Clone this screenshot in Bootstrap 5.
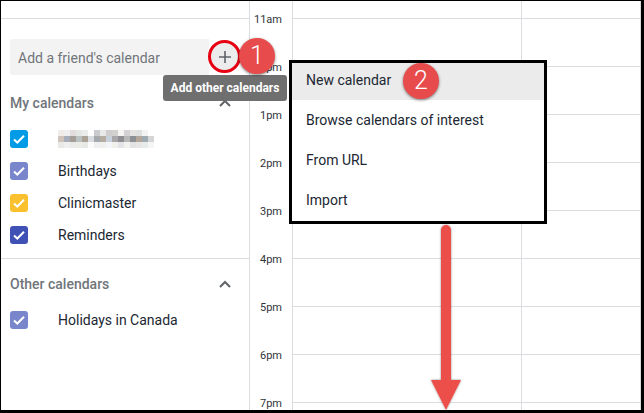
<!DOCTYPE html>
<html lang="en">
<head>
  <meta charset="UTF-8" />
  <meta name="viewport" content="width=device-width, initial-scale=1" />
  <title>Add other calendars</title>
  <link href="https://cdn.jsdelivr.net/npm/bootstrap@5.3.0/dist/css/bootstrap.min.css" rel="stylesheet" />
  <style>
    html, body { height: 100%; }
    body {
      background: #fff;
      font-family: Roboto, "Liberation Sans", sans-serif;
      font-size: 14px;
      color: #212732;
      overflow: hidden;
    }

    /* Screenshot frame: heavier on the right and bottom */
    .shot-frame {
      position: relative;
      width: 644px;
      height: 413px;
      border-style: solid;
      border-color: #000;
      border-width: 1px 3px 3px 1px;
      overflow: hidden;
    }

    /* Left sidebar */
    .cal-side { width: 248px; flex: none; }
    .side-top { height: 17px; border-bottom: 1px solid #dadce0; box-sizing: content-box; }
    .friend-row { margin: 20px 0 0 9px; }
    .friend-input {
      width: 199px;
      height: 36px;
      padding-left: 8px;
      background: #f3f3f3;
      border-radius: 3px 0 0 3px;
      color: #70757a;
      line-height: 38px;
    }
    .plus-btn {
      width: 30px;
      height: 30px;
      margin-left: 1px;
      border-radius: 50%;
      background: #ececec;
    }
    .section-head {
      height: 20px;
      padding: 0 18px 0 9px;
      color: #70757a;
      font-weight: 500;
    }
    .section-mine { margin-top: 18px; }
    .section-other { margin-top: 15px; }
    .cal-list { margin-top: 10px; }
    .cal-item { height: 32px; padding-left: 9px; gap: 30px; }
    .cal-box {
      width: 18px;
      height: 18px;
      flex: none;
      border-radius: 3px;
    }
    .cal-sep { height: 1px; margin-top: 7px; background: #dadce0; }
    .c-blue { background: #039be5; }
    .c-lav { background: #7986cb; }
    .c-yellow { background: #fbc02d; }
    .c-indigo { background: #3f51b5; }

    /* Hour column and day grid */
    .cal-hours {
      width: 42px;
      flex: none;
      border-left: 1px solid #dadce0;
      border-right: 1px solid #dadce0;
      box-sizing: content-box;
      font-size: 11px;
      color: #30343a;
    }
    .hour-cell {
      height: 48px;
      padding-right: 10px;
      text-align: right;
      line-height: 13px;
    }
    .hour-first { height: 12px; }
    .cal-day { flex: 1 1 0; border-right: 1px solid #dadce0; }
    .cal-day:last-child { border-right: 0; }
    .day-top { height: 17px; border-bottom: 1px solid #dadce0; box-sizing: content-box; }
    .day-cell { height: 48px; border-bottom: 1px solid #dadce0; }
    .day-first { width: 229px; flex: none; }

    /* Things drawn over the calendar */
    .add-tip {
      position: absolute;
      left: 162px;
      top: 74px;
      width: 124px;
      height: 26px;
      background: #6f6f6f;
      border-radius: 3px;
      color: #fff;
      font-size: 12px;
      font-weight: 700;
      line-height: 26px;
      text-align: center;
    }
    .plus-ring {
      position: absolute;
      left: 207px;
      top: 39px;
      width: 33px;
      height: 33px;
      border: 3px solid #e60012;
      border-radius: 50%;
    }
    .step-dot {
      position: absolute;
      z-index: 1001; /* dropdown-menu sits at 1000 */
      width: 36px;
      height: 36px;
      border-radius: 50%;
      background: #e84b4b;
      box-shadow: 0 1px 3px rgba(0, 0, 0, .5);
      color: #fff;
      font-size: 25px;
      font-weight: 300;
      line-height: 36px;
      text-align: center;
    }
    .step-one { left: 238px; top: 37px; }
    .step-two { left: 402px; top: 62px; }
    .new-menu {
      position: absolute;
      left: 288px;
      top: 59px;
      width: 258px;
      height: 164px;
      min-width: 0;
      margin: 0;
      padding: 0;
      display: block;
      background: #fff;
      border: 3px solid #000;
      border-radius: 0;
    }
    .new-menu .dropdown-item {
      height: 40px;
      padding: 0 0 0 14px;
      color: #212732;
      font-size: 14px;
      line-height: 40px;
    }
    .new-menu .dropdown-item.is-hover { height: 37px; line-height: 34px; background: #ebebeb; }
    .down-arrow { position: absolute; left: 425px; top: 222px; }
  </style>
</head>
<body>

<div class="shot-frame d-flex">
  <!-- Sidebar -->
  <aside class="cal-side">
    <div class="side-top"></div>
    <div class="friend-row d-flex align-items-center">
      <div class="friend-input">Add a friend's calendar</div>
      <div class="plus-btn d-flex align-items-center justify-content-center">
        <svg width="12" height="12" viewBox="0 0 12 12"><path d="M6 0v12M0 6h12" stroke="#5f6368" stroke-width="1.6" fill="none"/></svg>
      </div>
    </div>

    <div class="section-head section-mine d-flex align-items-center justify-content-between">
      <span>My calendars</span>
      <svg width="12" height="8" viewBox="0 0 12 8"><path d="M1 7l5-5 5 5" stroke="#5f6368" stroke-width="2" fill="none"/></svg>
    </div>
    <div class="cal-list">
      <div class="cal-item d-flex align-items-center">
        <span class="cal-box c-blue d-flex align-items-center justify-content-center"><svg width="14" height="14" viewBox="0 0 14 14"><path d="M2 7.5l3.3 3L12 3.8" stroke="#fff" stroke-width="2" fill="none"/></svg></span>
        <svg id="blurName" width="96" height="18" viewBox="0 0 96 18" shape-rendering="crispEdges"></svg>
      </div>
      <div class="cal-item d-flex align-items-center">
        <span class="cal-box c-lav d-flex align-items-center justify-content-center"><svg width="14" height="14" viewBox="0 0 14 14"><path d="M2 7.5l3.3 3L12 3.8" stroke="#fff" stroke-width="2" fill="none"/></svg></span>
        <span>Birthdays</span>
      </div>
      <div class="cal-item d-flex align-items-center">
        <span class="cal-box c-yellow d-flex align-items-center justify-content-center"><svg width="14" height="14" viewBox="0 0 14 14"><path d="M2 7.5l3.3 3L12 3.8" stroke="#fff" stroke-width="2" fill="none"/></svg></span>
        <span>Clinicmaster</span>
      </div>
      <div class="cal-item d-flex align-items-center">
        <span class="cal-box c-indigo d-flex align-items-center justify-content-center"><svg width="14" height="14" viewBox="0 0 14 14"><path d="M2 7.5l3.3 3L12 3.8" stroke="#fff" stroke-width="2" fill="none"/></svg></span>
        <span>Reminders</span>
      </div>
    </div>
    <div class="cal-sep"></div>

    <div class="section-head section-other d-flex align-items-center justify-content-between">
      <span>Other calendars</span>
      <svg width="12" height="8" viewBox="0 0 12 8"><path d="M1 7l5-5 5 5" stroke="#5f6368" stroke-width="2" fill="none"/></svg>
    </div>
    <div class="cal-list">
      <div class="cal-item d-flex align-items-center">
        <span class="cal-box c-lav d-flex align-items-center justify-content-center"><svg width="14" height="14" viewBox="0 0 14 14"><path d="M2 7.5l3.3 3L12 3.8" stroke="#fff" stroke-width="2" fill="none"/></svg></span>
        <span>Holidays in Canada</span>
      </div>
    </div>
  </aside>

  <!-- Hours -->
  <div class="cal-hours">
    <div class="hour-first"></div>
    <div class="hour-cell">11am</div>
    <div class="hour-cell">12pm</div>
    <div class="hour-cell">1pm</div>
    <div class="hour-cell">2pm</div>
    <div class="hour-cell">3pm</div>
    <div class="hour-cell">4pm</div>
    <div class="hour-cell">5pm</div>
    <div class="hour-cell">6pm</div>
    <div class="hour-cell">7pm</div>
  </div>

  <!-- Days, rows are filled in below -->
  <div class="cal-day day-first"><div class="day-top"></div></div>
  <div class="cal-day"><div class="day-top"></div></div>

  <!-- Overlays -->
  <div class="plus-ring"></div>
  <div class="add-tip">Add other calendars</div>
  <div class="step-dot step-one">1</div>

  <div class="dropdown-menu new-menu">
    <a class="dropdown-item is-hover" href="#">New calendar</a>
    <a class="dropdown-item" href="#">Browse calendars of interest</a>
    <a class="dropdown-item" href="#">From URL</a>
    <a class="dropdown-item" href="#">Import</a>
  </div>
  <div class="step-dot step-two">2</div>

  <svg class="down-arrow" width="40" height="188" viewBox="0 0 40 188">
    <defs><filter id="arrowShadow" x="-30%" y="-5%" width="160%" height="110%"><feDropShadow dx="0" dy="0" stdDeviation="1" flood-color="#000" flood-opacity=".45"/></filter></defs>
    <path filter="url(#arrowShadow)" fill="#ec4f4a" d="M15 7a5 5 0 0 1 10 0v150h10l-15 30-15-30h10z"/>
  </svg>
</div>

<script src="https://cdn.jsdelivr.net/npm/bootstrap@5.3.0/dist/js/bootstrap.bundle.min.js"></script>
<script>
  // Hour rows for both day columns
  document.querySelectorAll('.cal-day').forEach(day => {
    for (let i = 0; i < 8; i++) {
      const cell = document.createElement('div');
      cell.className = 'day-cell';
      day.appendChild(cell);
    }
  });

  // Pixelated calendar name, 16 x 3 blocks of 6px
  const blocks = [
    ['f1ece9','f0efef','e3dcdc','e4e7e6','e9ecea','ffffff','c9cbcf','e9e9ea','cfcdce','d3d1d0','f6f5f4','d3d2d4','e6e4e3','dfe1e0','f3f3f3','ffffff'],
    ['cfc3bb','a8aeb9','a59d97','bcc2c2','aca397','d9dde2','a5a8ad','b5aca3','c9d2dc','a9a7a9','8f8e93','b8b8b8','8d9094','b3a69b','9fabb2','d5d5d5'],
    ['e9e9e8','f0efef','e9eaea','ebebe8','e7e9e5','fbfbfb','eef0f2','f0f0ee','f3f5f8','f0f0ec','e4e4e8','f2f2f0','e3e3e6','e8e6e4','e8ebec','f5f5f5']
  ];
  const blur = document.getElementById('blurName');
  blocks.forEach((row, y) => row.forEach((col, x) => {
    const r = document.createElementNS('http://www.w3.org/2000/svg', 'rect');
    r.setAttribute('x', x * 6);
    r.setAttribute('y', y * 6);
    r.setAttribute('width', 6);
    r.setAttribute('height', 6);
    r.setAttribute('fill', '#' + col);
    blur.appendChild(r);
  }));
</script>
</body>
</html>
